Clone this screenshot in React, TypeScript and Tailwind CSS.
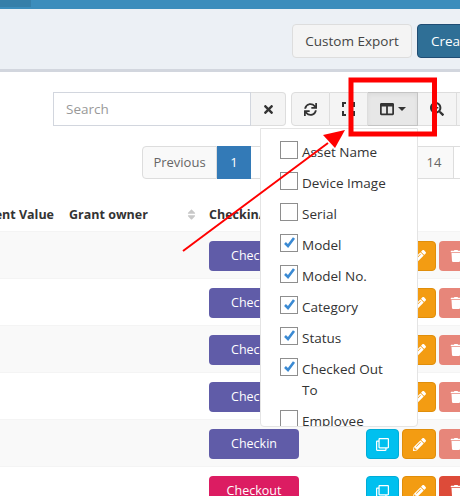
import { FaColumns, FaPencilAlt, FaRegClone, FaSearchPlus, FaSort, FaSync, FaTimes, FaTrash } from "react-icons/fa";

const columns = [
  { label: "Asset Name", on: false },
  { label: "Device Image", on: false },
  { label: "Serial", on: false },
  { label: "Model", on: true },
  { label: "Model No.", on: true },
  { label: "Category", on: true },
  { label: "Status", on: true },
  { label: "Checked Out To", on: true },
  { label: "Employee", on: false },
];

const rows = [
  { action: "Checkin", striped: true },
  { action: "Checkin", striped: false },
  { action: "Checkin", striped: true },
  { action: "Checkin", striped: false },
  { action: "Checkin", striped: true },
  { action: "Checkout", striped: false },
];

function FullscreenIcon() {
  return (
    <svg width="13" height="14" viewBox="0 0 13 14" fill="none" stroke="#333" strokeWidth="2">
      <path d="M1 5V1h3M9 1h3v4M12 9v4H9M4 13H1V9" />
    </svg>
  );
}

function ColumnPicker() {
  return (
    <div className="absolute left-[260px] top-[128px] z-10 h-[299px] w-[158px] overflow-hidden rounded-b border border-[#e4e4e4] bg-white pl-[19px] pt-[12px] text-[13.5px] text-[#333]">
      {columns.map((col) => (
        <label key={col.label} className="mb-[10.5px] flex items-start gap-[4px] leading-[20.5px]">
          <span className="relative h-[18px] w-[18px] shrink-0 border border-[#8e8e8e] bg-white">
            {col.on && (
              <svg className="absolute left-[2px] top-[1px]" width="13" height="13" viewBox="0 0 13 13" fill="none" stroke="#3b8ad3" strokeWidth="2.6">
                <path d="M2 7l3 3 6-8" />
              </svg>
            )}
          </span>
          <span className="relative top-[1px] w-[96px]">{col.label}</span>
        </label>
      ))}
    </div>
  );
}

function Annotations() {
  return (
    <svg className="pointer-events-none absolute inset-0 z-20" width="460" height="496" viewBox="0 0 460 496">
      <rect x="351" y="80" width="83.5" height="54" fill="none" stroke="#ff0000" strokeWidth="5" />
      <path d="M183 251L328 143" stroke="#ff0000" strokeWidth="2" />
      <path d="M345 130L323 135L335 148Z" fill="#ff0000" />
    </svg>
  );
}

export default function App() {
  return (
    <div className="relative h-[496px] w-[460px] overflow-hidden bg-white font-['Open_Sans','Noto_Sans',sans-serif] text-[13.5px] text-[#333]">
      <div className="h-[9px] bg-[#3c8dbc]">
        <div className="h-[7px] w-[31px] bg-[#367fa9]" />
      </div>

      <div className="flex h-[63px] gap-[5px] whitespace-nowrap border-b-[3px] border-[#d2d6de] bg-[#ecf0f5] pl-[292px] pt-[15px]">
        <button className="h-[34px] w-[120px] shrink-0 rounded border border-[#ddd] bg-[#f4f4f4] pt-[1px] text-[#444]">Custom Export</button>
        <button className="h-[34px] w-[90px] shrink-0 rounded border border-[#204d74] bg-[#2f6f96] pl-[13px] pt-[1px] text-left text-white">Create</button>
      </div>

      <div className="ml-[53px] mt-[20px] flex h-[34px] whitespace-nowrap">
        <div className="flex h-full w-[198px] shrink-0 items-center border border-[#d2d6de] pl-[12px] text-[#999]">Search</div>
        <button className="flex h-full w-[35px] shrink-0 items-center justify-center rounded-r border border-l-0 border-[#ddd] bg-[#f4f4f4]">
          <FaTimes size={13} />
        </button>
        <div className="ml-[5px] flex h-full shrink-0">
          <button className="flex h-full w-[39px] items-center justify-center rounded-l border border-[#ddd] bg-[#f4f4f4]">
            <FaSync size={13} />
          </button>
          <button className="flex h-full w-[38px] items-center justify-center border border-l-0 border-[#ddd] bg-[#f4f4f4]">
            <FullscreenIcon />
          </button>
          <button className="flex h-full w-[50px] items-center justify-center gap-[4px] border border-l-0 border-[#c4c4c4] bg-[#e7e7e7] shadow-inner">
            <FaColumns size={14} />
            <span className="h-0 w-0 border-x-[4px] border-t-[4px] border-x-transparent border-t-[#333]" />
          </button>
          <button className="flex h-full w-[39px] items-center justify-center border border-l-0 border-[#ddd] bg-[#f4f4f4]">
            <FaSearchPlus size={14} />
          </button>
          <button className="h-full w-[20px] border border-l-0 border-[#ddd] bg-[#f4f4f4]" />
        </div>
      </div>

      <div className="ml-[142px] mt-[20px] flex h-[33px] whitespace-nowrap text-[13px] text-[#666]">
        <span className="flex w-[75px] shrink-0 items-center justify-center rounded-l border border-[#ddd] bg-[#f9f9f9] pt-[1px]">Previous</span>
        <span className="flex w-[34px] shrink-0 items-center justify-center bg-[#337ab7] pt-[1px] text-white">1</span>
        <span className="flex w-[163px] shrink-0 items-center justify-center border-y border-[#ddd]">2</span>
        <span className="flex w-[40px] shrink-0 items-center justify-center border border-[#ddd] bg-[#f9f9f9] pt-[1px]">14</span>
        <span className="w-[20px] shrink-0 border-y border-[#ddd]" />
      </div>

      <div className="mt-[23px] flex h-[30px] items-start overflow-hidden whitespace-nowrap border-b border-[#f4f4f4] text-[12.5px] font-bold leading-[26px] text-[#333]">
        <div className="flex w-[69px] shrink-0 justify-end overflow-hidden pr-[15px]">
          <span className="shrink-0">Current Value</span>
        </div>
        <div className="relative w-[140px] shrink-0">
          <span>Grant owner</span>
          <FaSort size={13} className="absolute left-[116px] top-[6px] text-[#c8c8c8]" />
        </div>
        <div>Checkin/Checkout</div>
      </div>

      {rows.map((row, i) => (
        <div
          key={i}
          className={`flex h-[47px] items-start border-b border-[#f4f4f4] pl-[209px] pt-[9px] ${row.striped ? "bg-[#f9f9f9]" : "bg-white"}`}
        >
          <button className={`h-[30px] w-[90px] shrink-0 rounded text-[12.5px] text-white ${row.action === "Checkin" ? "bg-[#605ca8]" : "bg-[#dc1c62]"}`}>
            {row.action}
          </button>
          <div className="ml-[67px] flex shrink-0 gap-[3px] text-white">
            <button className="flex h-[30px] w-[33px] items-center justify-center rounded border border-[#00acd6] bg-[#00c0ef]">
              <FaRegClone size={13} />
            </button>
            <button className="flex h-[30px] w-[34px] items-center justify-center rounded border border-[#e08e0b] bg-[#f39c12]">
              <FaPencilAlt size={13} />
            </button>
            <button className={`flex h-[30px] w-[34px] items-center justify-center rounded ${row.action === "Checkin" ? "bg-[#e7867a]" : "bg-[#dd4b39]"}`}>
              <FaTrash size={12} />
            </button>
          </div>
        </div>
      ))}

      <ColumnPicker />
      <Annotations />
    </div>
  );
}
